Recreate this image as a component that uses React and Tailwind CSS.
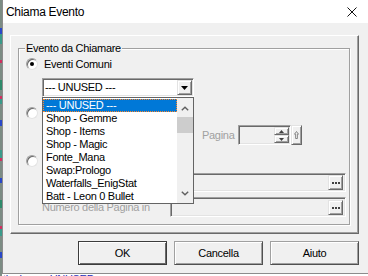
import React from 'react';

const eventi = [
  '--- UNUSED ---',
  'Shop - Gemme',
  'Shop - Items',
  'Shop - Magic',
  'Fonte_Mana',
  'Swap:Prologo',
  'Waterfalls_EnigStat',
  'Batt - Leon 0 Bullet',
];

const sunken =
  'border border-t-[#a0a0a0] border-l-[#a0a0a0] border-r-white border-b-white shadow-[inset_1px_1px_0_#696969,inset_-1px_-1px_0_#e3e3e3]';
const raised =
  'bg-[#f0f0f0] border border-t-[#e3e3e3] border-l-[#e3e3e3] border-r-[#696969] border-b-[#696969] shadow-[inset_1px_1px_0_#fff,inset_-1px_-1px_0_#a0a0a0]';

function Radio({ checked }) {
  return (
    <div className="w-[12px] h-[12px] rounded-full bg-white border border-t-[#a0a0a0] border-l-[#a0a0a0] border-r-[#e3e3e3] border-b-[#e3e3e3] shadow-[inset_1px_1px_0_#696969] flex items-center justify-center">
      {checked && <div className="w-[4px] h-[4px] rounded-full bg-black" />}
    </div>
  );
}

function Dots() {
  return (
    <div className={`w-[15px] h-[15px] ${raised} flex items-end justify-center gap-[1px] pb-[5px]`}>
      <div className="w-[2px] h-[2px] bg-[#404040]" />
      <div className="w-[2px] h-[2px] bg-[#404040]" />
      <div className="w-[2px] h-[2px] bg-[#404040]" />
    </div>
  );
}

function Campo({ h = 'h-[19px]' }) {
  return (
    <div className={`w-[176px] ${h} ${sunken} bg-[#f0f0f0] flex items-center justify-end pr-[2px]`}>
      <Dots />
    </div>
  );
}

function Striscia() {
  // pezzo della mappa dietro alla finestra
  const pezzi = [
    [0, '#7c8c84'], [28, '#2a48c8'], [34, '#3a9a8a'], [44, '#7c8c84'], [60, '#d03060'],
    [63, '#7c8c84'], [80, '#2e8a6a'], [90, '#7c8c84'], [96, '#d03060'], [99, '#3a9a8a'],
    [104, '#7c8c84'], [120, '#2a48c8'], [126, '#7c8c84'], [150, '#3a9a8a'], [158, '#d03060'],
    [161, '#7c8c84'], [178, '#2a48c8'], [183, '#7c8c84'], [200, '#2e8a6a'], [208, '#7c8c84'],
    [226, '#d03060'], [229, '#3a9a8a'], [236, '#7c8c84'], [252, '#2a48c8'], [258, '#7c8c84'],
  ];
  return (
    <svg width="2" height="276" className="shrink-0">
      {pezzi.map(([y, c], i) => (
        <rect key={i} x="0" y={y} width="2" height={(pezzi[i + 1] ? pezzi[i + 1][0] : 276) - y} fill={c} />
      ))}
    </svg>
  );
}

export default function App() {
  return (
    <div className="w-[368px] h-[276px] overflow-hidden flex bg-white font-['Liberation_Sans',Arial,sans-serif] text-[11px] tracking-[-0.3px] text-black">
      <Striscia />
      <div className="flex-1 flex flex-col">
        <div className="h-[274px] shrink-0 border-l border-b border-[#8c8c8c] bg-[#f0f0f0] flex flex-col">
          {/* barra del titolo */}
          <div className="h-[23px] bg-white flex items-center justify-between pl-[3px] pr-[11px] pt-[1px]">
            <span className="text-[12px]">Chiama Evento</span>
            <svg width="10" height="10" viewBox="0 0 10 10">
              <path d="M0.5 0.5L9.5 9.5M9.5 0.5L0.5 9.5" stroke="#111" strokeWidth="1" />
            </svg>
          </div>

          {/* pannello */}
          <div className="ml-[7px] mt-[12px] w-[349px] h-[199px] border border-t-white border-l-white border-r-[#696969] border-b-[#696969] shadow-[inset_-1px_-1px_0_#a0a0a0]">
            <div className="relative ml-[7px] mt-[12px] w-[332px] h-[177px] border border-[#a0a0a0] shadow-[inset_1px_1px_0_#fff,1px_1px_0_#fff]">
              <span className="absolute left-[6px] -top-[7px] px-[1px] bg-[#f0f0f0] leading-[13px]">Evento da Chiamare</span>

              <div className="mt-[9px] pl-[7px] h-[12px] flex items-center gap-[6px]">
                <Radio checked />
                <span className="leading-[12px]">Eventi Comuni</span>
              </div>

              <div className={`relative mt-[8px] ml-[23px] w-[152px] h-[19px] bg-white ${sunken} flex items-center justify-between pl-[2px] pr-[1px]`}>
                <span className="leading-[13px]">--- UNUSED ---</span>
                <div className={`w-[15px] h-[15px] ${raised} flex items-center justify-center`}>
                  <svg width="7" height="4" viewBox="0 0 7 4">
                    <path d="M0 0H7L3.5 4Z" fill="#000" />
                  </svg>
                </div>

                {/* lista aperta */}
                <div className="absolute left-[-1px] top-[18px] z-10 w-[152px] h-[107px] bg-white border border-[#646464] flex">
                  <div className="w-[134px] pt-[1px] flex flex-col">
                    {eventi.map((ev, i) => (
                      <div
                        key={ev}
                        className={
                          i === 0
                            ? 'h-[13px] leading-[13px] pl-[3px] bg-[#0078d7] text-white outline-1 outline-dotted -outline-offset-1 outline-[#ff8728] whitespace-nowrap'
                            : 'h-[13px] leading-[13px] pl-[3px] whitespace-nowrap'
                        }
                      >
                        {ev}
                      </div>
                    ))}
                  </div>
                  <div className="w-[16px] bg-[#f0f0f0] flex flex-col">
                    <div className="h-[19px] flex items-center justify-center pt-[1px]">
                      <svg width="8" height="5" viewBox="0 0 8 5">
                        <path d="M0.8 4.3L4 1.2L7.2 4.3" stroke="#606060" strokeWidth="1.4" fill="none" />
                      </svg>
                    </div>
                    <div className="h-[16px] bg-[#cdcdcd]" />
                    <div className="flex-1" />
                    <div className="h-[17px] flex items-center justify-center pb-[3px]">
                      <svg width="8" height="5" viewBox="0 0 8 5">
                        <path d="M0.8 0.7L4 3.8L7.2 0.7" stroke="#606060" strokeWidth="1.4" fill="none" />
                      </svg>
                    </div>
                  </div>
                </div>
              </div>

              <div className="mt-[10px] pl-[7px] h-[12px] flex items-center">
                <Radio />
              </div>

              <div className="mt-[6px] h-[20px] flex items-center pl-[183px]">
                <span className="w-[36px] text-[#a0a0a0]">Pagina</span>
                <div className={`w-[53px] h-[20px] ${sunken} bg-[#f0f0f0] flex justify-end items-stretch p-[1px]`}>
                  <div className="w-[15px] flex flex-col">
                    <div className={`flex-1 ${raised} flex items-center justify-center`}>
                      <svg width="5" height="3" viewBox="0 0 5 3">
                        <path d="M0 3H5L2.5 0Z" fill="#404040" />
                      </svg>
                    </div>
                    <div className={`flex-1 ${raised} flex items-center justify-center`}>
                      <svg width="5" height="3" viewBox="0 0 5 3">
                        <path d="M0 0H5L2.5 3Z" fill="#404040" />
                      </svg>
                    </div>
                  </div>
                </div>
                <div className={`w-[11px] h-[20px] ${raised} flex items-center justify-center`}>
                  <svg width="5" height="8" viewBox="0 0 5 8">
                    <path d="M2.5 0.5L4.5 3.2H3.4V7.5H1.6V3.2H0.5Z" stroke="#707070" strokeWidth="0.8" fill="none" />
                  </svg>
                </div>
              </div>

              <div className="mt-[10px] pl-[7px] h-[12px] flex items-center">
                <Radio />
              </div>

              <div className="mt-[6px] pl-[151px]">
                <Campo />
              </div>

              <div className="mt-[5px] h-[20px] flex items-center pl-[23px]">
                <span className="w-[128px] text-[#a0a0a0] whitespace-nowrap">Numero della Pagina in</span>
                <Campo h="h-[20px]" />
              </div>
            </div>
          </div>

          {/* pulsanti */}
          <div className="mt-[7px] w-[356px] flex justify-end gap-[7px]">
            <button className="w-[89px] h-[24px] bg-[#f0f0f0] border border-[#3c3c3c] shadow-[inset_1px_1px_0_#fff,inset_-1px_-1px_0_#696969] flex items-center justify-center">
              OK
            </button>
            <button className="w-[89px] h-[24px] bg-[#f0f0f0] border border-t-[#a0a0a0] border-l-[#a0a0a0] border-r-[#505050] border-b-[#505050] shadow-[inset_1px_1px_0_#fff,inset_-1px_-1px_0_#a0a0a0] flex items-center justify-center">
              Cancella
            </button>
            <button className="w-[89px] h-[24px] bg-[#f0f0f0] border border-t-[#a0a0a0] border-l-[#a0a0a0] border-r-[#505050] border-b-[#505050] shadow-[inset_1px_1px_0_#fff,inset_-1px_-1px_0_#a0a0a0] flex items-center justify-center">
              Aiuto
            </button>
          </div>
        </div>

        {/* testo dietro alla finestra */}
        <div className="h-[2px] overflow-hidden bg-white">
          <div className="-mt-[1px] flex gap-[20px] pl-[1px] text-[#1c2cb8] leading-[13px]">
            <span>tionic:</span>
            <span>UNUSED</span>
          </div>
        </div>
      </div>
    </div>
  );
}
